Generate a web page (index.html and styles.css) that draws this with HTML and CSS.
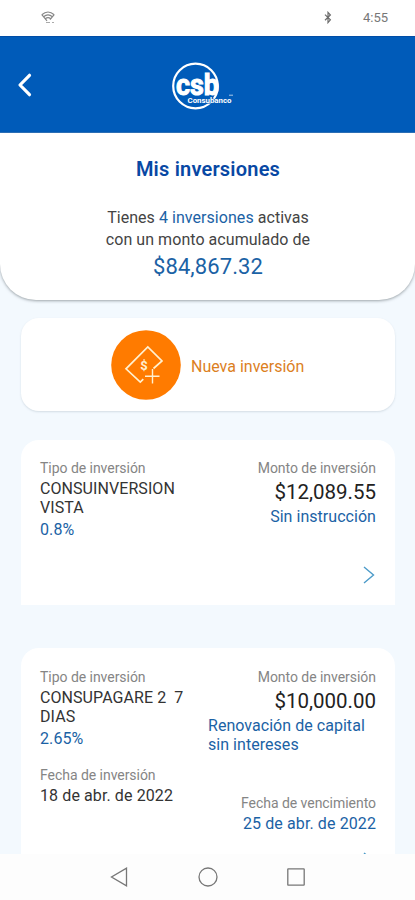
FILE: index.html
```html
<!DOCTYPE html>
<html lang="es">
<head>
<meta charset="utf-8">
<meta name="viewport" content="width=device-width, initial-scale=1">
<title>Mis inversiones</title>
<link rel="stylesheet" href="styles.css">
</head>
<body>
<div class="screen">
  <div class="status">
    <svg class="wifi" width="14" height="13" viewBox="0 0 14 13" fill="none" stroke="#858585" stroke-width="1.2">
      <path d="M.8 3.7Q7-1.7 13.2 3.7M2.6 5.8Q7 2 11.4 5.8M4.3 7.7Q7 5.4 9.7 7.7M.8 3.7L6 9.8M13.2 3.7L9 8.6"/>
      <path d="M5 11.5h4M11 11.5h2" stroke="#aaa"/>
    </svg>
    <svg class="bt" width="8" height="13" viewBox="0 0 8 13" fill="none" stroke="#6c6c6c" stroke-width="1.2">
      <path d="M1 3.6l5.4 5.2L4 11.6V1.4l2.4 2.6L1 9.2"/>
    </svg>
    <span class="time">4:55</span>
  </div>

  <header class="header">
    <svg class="back" width="16" height="24" viewBox="0 0 16 24" fill="none" stroke="#fff" stroke-width="3.2" stroke-linecap="round" stroke-linejoin="round">
      <path d="M12.500 2.300L3 12l9.500 9.700"/>
    </svg>
    <svg class="logo" width="62" height="50" viewBox="0 0 62 50">
      <circle cx="23.500" cy="24" r="22.300" fill="none" stroke="#fff" stroke-width="2.200"/>
      <text x="4" y="32.500" class="logo-main" textLength="43" lengthAdjust="spacingAndGlyphs">csb</text>
      <text x="15.500" y="40.500" class="logo-sub" textLength="44" lengthAdjust="spacingAndGlyphs">Consubanco</text>
      <path d="M57 33.200h4" stroke="#a9c9e9" stroke-width="1"/>
    </svg>
  </header>

  <section class="summary">
    <h1>Mis inversiones</h1>
    <p class="lead">Tienes <span class="blue">4 inversiones</span> activas</p>
    <p class="lead second">con un monto acumulado de</p>
    <p class="total">$84,867.32</p>
  </section>

  <main class="list">
    <div class="card new">
      <svg width="70" height="70" viewBox="0 0 70 70" fill="none">
        <circle cx="35" cy="35" r="34.800" fill="#ff7b00"/>
        <path d="M42.500 38.500L51 31 36.800 17 15 38.800 29.300 52l3-2.800" stroke="#fff0cf" stroke-width="1.700"/>
        <path d="M41.500 39v14.500M34 46.300h14.500" stroke="#fff0cf" stroke-width="1.400"/>
        <text x="33" y="39.500" class="dollar">$</text>
      </svg>
      <span class="new-label">Nueva inversión</span>
    </div>

    <article class="card first">
      <div class="col">
        <span class="label">Tipo de inversión</span>
        <span class="name">CONSUINVERSION<br>VISTA</span>
        <span class="rate">0.8%</span>
      </div>
      <div class="col right">
        <span class="label">Monto de inversión</span>
        <span class="amount">$12,089.55</span>
        <span class="instr">Sin instrucción</span>
        <svg class="more" width="12" height="18" viewBox="0 0 12 18" fill="none" stroke="#4c9bc9" stroke-width="1.400">
          <path d="M1 1l9.500 8L1 17"/>
        </svg>
      </div>
    </article>

    <article class="card second-card">
      <div class="col">
        <span class="label">Tipo de inversión</span>
        <span class="name pagare">CONSUPAGARE 2&nbsp; 7<br>DIAS</span>
        <span class="rate">2.65%</span>
        <span class="label start">Fecha de inversión</span>
        <span class="date">18 de abr. de 2022</span>
      </div>
      <div class="col right">
        <span class="label">Monto de inversión</span>
        <span class="amount">$10,000.00</span>
        <span class="instr renew">Renovación de capital<br>sin intereses</span>
        <span class="label end">Fecha de vencimiento</span>
        <span class="date blue">25 de abr. de 2022</span>
        <svg class="more peek" width="12" height="18" viewBox="0 0 12 18" fill="none" stroke="#4c9bc9" stroke-width="1.400">
          <path d="M1 1l9.500 8L1 17"/>
        </svg>
      </div>
    </article>
  </main>

  <nav class="nav">
    <svg width="18" height="20" viewBox="0 0 18 20" fill="none" stroke="#777" stroke-width="1.300"><path d="M16.500 1.200v17.600L1.500 10z"/></svg>
    <svg width="20" height="20" viewBox="0 0 20 20" fill="none" stroke="#777" stroke-width="1.300"><circle cx="10" cy="10" r="9"/></svg>
    <svg width="18" height="18" viewBox="0 0 18 18" fill="none" stroke="#777" stroke-width="1.300"><rect x=".8" y=".8" width="16.400" height="16.400" rx=".5"/></svg>
  </nav>
</div>
</body>
</html>
```
FILE: styles.css
```css
* { box-sizing: border-box; }
body { margin: 0; font-family: Roboto, sans-serif; color: #333; background: #f3f9fe; }
h1, p { margin: 0; }
svg { display: block; flex: none; }
.screen { width: 415px; height: 900px; overflow: hidden; display: flex; flex-direction: column; background: #f3f9fe; }

.status { flex: none; height: 36px; background: #fff; display: flex; align-items: center; padding: 0 27px 0 41px; }
.wifi { margin-top: -2px; }
.bt { margin-left: auto; margin-right: 31px; margin-top: -1px; }
.time { font-size: 13px; color: #777; line-height: 16px; }

.header { flex: none; height: 97px; background: #005bb9; border-top: 1px solid #004da6; border-bottom: 1px solid #2a72bd; display: flex; align-items: center; padding-left: 17px; }
.logo { margin-left: 139px; margin-top: 4px; }
.logo-main { font: 700 29px Roboto, sans-serif; fill: #fff; stroke: #fff; stroke-width: 1px; }
.logo-sub { font: 700 8px Roboto, sans-serif; fill: #fff; stroke: #005bb9; stroke-width: 1.200px; paint-order: stroke; }

.summary { flex: none; height: 167px; background: #fff; border-radius: 0 0 36px 36px; box-shadow: 0 1px 3px rgba(70, 80, 85, .5); text-align: center; padding: 24px 0 0 1px; }
h1 { font-size: 20px; font-weight: 600; line-height: 24px; letter-spacing: .2px; color: #0848a4; }
.lead { font-size: 16px; line-height: 22px; letter-spacing: .05px; margin-top: 26px; color: #444; }
.lead.second { margin-top: 0; }
.blue { color: #1b62a5; }
.total { font-size: 22px; line-height: 30px; letter-spacing: .1px; margin-top: 1px; color: #1b62a5; }

.list { flex: none; height: 554px; overflow: hidden; padding: 18px 20px 0 21px; }
.card { background: #fff; border-radius: 18px; display: flex; }
.new { height: 93px; align-items: center; padding-left: 90px; gap: 10px; box-shadow: 0 1px 2px rgba(120, 140, 155, .25); }
.new-label { font-size: 16px; color: #dc801e; padding-top: 3px; }
.dollar { font: 700 13px Roboto, sans-serif; fill: #fff0cf; text-anchor: middle; }
.first { height: 165px; margin-top: 29px; border-radius: 18px 18px 0 0; }
.second-card { height: 240px; margin-top: 43px; }
.first, .second-card { padding: 19px 19px 0; justify-content: space-between; }
.second-card { padding-top: 20px; }
.col { display: flex; flex-direction: column; align-items: flex-start; white-space: nowrap; }
.right { align-items: flex-end; }
.label { font-size: 14px; line-height: 19px; letter-spacing: -.04px; color: #858585; }
.name { font-size: 16px; line-height: 19px; letter-spacing: .07px; margin-top: 1px; color: #333; }
.rate { font-size: 16px; line-height: 20px; letter-spacing: .1px; margin-top: 3px; color: #1b62a5; }
.amount { font-size: 20.500px; line-height: 26px; margin-top: 1px; color: #222; }
.instr { font-size: 16px; line-height: 19px; letter-spacing: .04px; margin-top: 2px; color: #1b62a5; }
.renew { width: 168px; margin-top: 2px; }
.more { margin-top: 40px; margin-right: 1px; }
.start { margin-top: 17px; }
.end { margin-top: 40px; }
.date { font-size: 16px; line-height: 20px; letter-spacing: .1px; margin-top: 1px; color: #333; }
.date.blue { color: #1b62a5; }
.peek { margin-top: 18px; }

.nav { flex: none; height: 46px; background: #fdfdfd; display: flex; align-items: center; padding-left: 110px; gap: 70px; }
.nav svg:last-child { margin-left: -1px; }
```
